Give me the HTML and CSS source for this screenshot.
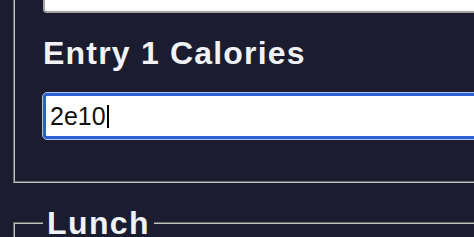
FILE: index.html
```html
<!DOCTYPE html>
<html lang="en">
<head>
    <meta charset="UTF-8">
    <meta name="viewport" content="width=device-width, initial-scale=1.0">
    <title>Meal Log</title>
    <link rel="stylesheet" href="styles.css">
</head>
<body>
<div class="log">
    <fieldset class="meal meal-first">
        <div class="field"></div>
        <label class="entry-label">Entry 1 Calories</label>
        <div class="field is-focused">
            <span>2e10</span><span class="caret"></span>
        </div>
    </fieldset>

    <fieldset class="meal">
        <legend>Lunch</legend>
        <label class="entry-label">Entry 1 Name</label>
        <div class="field"></div>
    </fieldset>
</div>
</body>
</html>
```

FILE: styles.css
```css
body {
    margin: 0;
    padding: 0;
    background-color: #1b1c2f;
    font-family: 'Liberation Sans', Arial, Helvetica, sans-serif;
    overflow: hidden;
}

.log {
    width: 760px;
}

.meal {
    margin: 21px 0 0 13px;
    padding: 5px 28px 42px 28px;
    border: 2px groove #c0c0c0;
}

.meal-first {
    margin-top: -40px;
}

.meal legend {
    padding: 0 4px;
    font-size: 32px;
    line-height: 38px;
    font-weight: bold;
    letter-spacing: 1.4px;
    color: #f1f2f6;
}

.entry-label {
    display: block;
    margin: 23px 0;
    font-size: 32px;
    line-height: 34px;
    font-weight: bold;
    letter-spacing: 1.2px;
    color: #f1f2f6;
}

.field {
    box-sizing: border-box;
    height: 46px;
    padding: 0 4px;
    background-color: white;
    border: 2px solid #a3a3a3;
    border-radius: 4px;
    font-size: 25px;
    line-height: 42px;
    color: #111;
}

.field.is-focused {
    border: 3px solid #2c5fcf;
    outline: 1px solid #a9c3ef;
    line-height: 40px;
}

.caret {
    display: inline-block;
    width: 2px;
    height: 23px;
    margin-left: 1px;
    vertical-align: -3px;
    background-color: #000;
}
```
